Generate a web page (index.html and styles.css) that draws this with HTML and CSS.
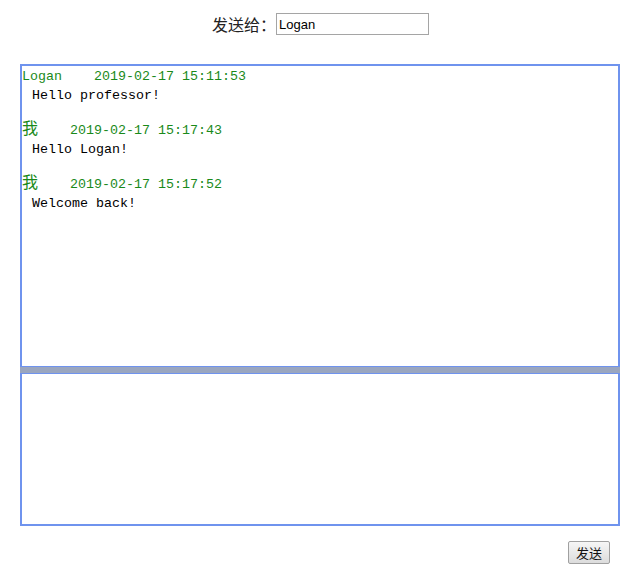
FILE: index.html
```html
<!DOCTYPE html>
<html lang="zh-CN">
<head>
    <meta charset="UTF-8">
    <title>聊天</title>
    <link rel="stylesheet" href="styles.css">
</head>
<body>

    <!-- 收件人 -->
    <div class="to-row">
        <label for="toUser">发送给：</label><input type="text" id="toUser" class="to-input" value="Logan">
    </div>

    <!-- 聊天窗口 -->
    <div class="chat">
        <div class="msg-box">
            <div class="msg">
                <div class="msg-head">Logan&nbsp;&nbsp;&nbsp;&nbsp;2019-02-17 15:11:53</div>
                <div class="msg-text">Hello professor!</div>
            </div>
            <div class="msg">
                <div class="msg-head"><span class="me">我</span>&nbsp;&nbsp;&nbsp;&nbsp;2019-02-17 15:17:43</div>
                <div class="msg-text">Hello Logan!</div>
            </div>
            <div class="msg">
                <div class="msg-head"><span class="me">我</span>&nbsp;&nbsp;&nbsp;&nbsp;2019-02-17 15:17:52</div>
                <div class="msg-text">Welcome back!</div>
            </div>
        </div>
        <div class="splitter"></div>
        <textarea class="input-box"></textarea>
        <div class="actions">
            <button type="button" class="send-btn">发送</button>
        </div>
    </div>

</body>
</html>
```

FILE: styles.css
```css
body {
    margin: 0;
    font-family: "Liberation Sans", "Noto Sans CJK SC", sans-serif;
    background-color: #fff;
    color: #000;
}

/* top row */
.to-row {
    text-align: center;
    padding: 12px 0 0 3px;
    height: 64px;
    box-sizing: border-box;
    font-size: 16px;
}

.to-row label {
    color: #222;
    vertical-align: middle;
}

.to-input {
    width: 153px;
    height: 22px;
    box-sizing: border-box;
    border: 1px solid #a5a5a5;
    padding: 1px 2px;
    font-family: "Liberation Sans", sans-serif;
    font-size: 13px;
    vertical-align: middle;
    margin: 0;
}

/* chat area */
.chat {
    width: 600px;
    margin-left: 20px;
}

.msg-box {
    height: 303px;
    box-sizing: border-box;
    border: 2px solid #6f93ee;
    border-bottom-width: 1px;
    padding-top: 1px;
    font-family: "Liberation Mono", "Noto Sans CJK SC", monospace;
    font-size: 13.33px;
    line-height: 19px;
    overflow: hidden;
}

.msg {
    margin-bottom: 16px;
}

.msg-head {
    color: #1a8a1a;
    white-space: nowrap;
}

.me {
    display: inline-block;
    width: 16px;
    font-size: 16px;
    line-height: 19px;
}

.msg-text {
    padding-left: 10px;
}

.splitter {
    height: 6px;
    background-color: #9aa6bf;
}

.input-box {
    display: block;
    width: 600px;
    height: 153px;
    box-sizing: border-box;
    border: 2px solid #6f93ee;
    border-top-width: 1px;
    margin: 0;
    padding: 2px;
    resize: none;
    outline: none;
}

.actions {
    text-align: right;
    padding: 15px 10px 0 0;
}

.send-btn {
    width: 42px;
    height: 23px;
    padding: 0;
    font-family: "Noto Sans CJK SC", sans-serif;
    font-size: 13px;
    color: #111;
    background: linear-gradient(#f6f6f6, #dcdcdc);
    border: 1px solid #a0a0a0;
    border-radius: 2px;
}
```
